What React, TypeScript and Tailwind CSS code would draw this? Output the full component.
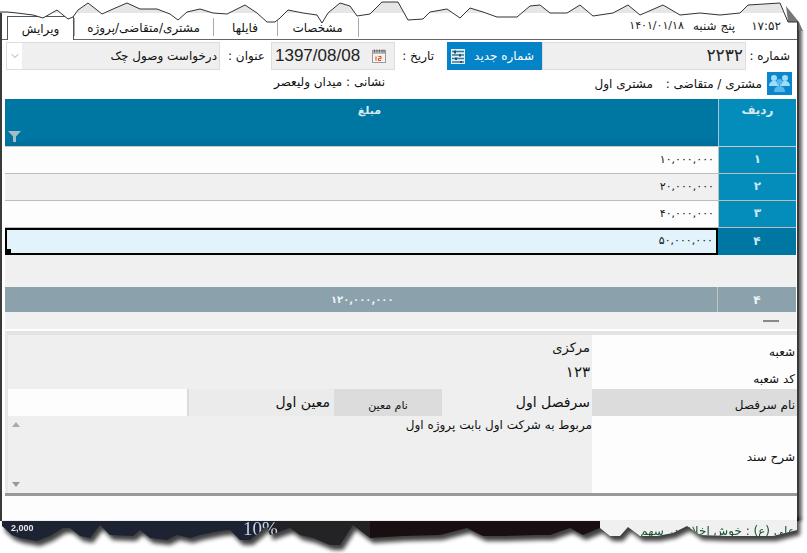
import React from "react";
import { ChevronDown } from "lucide-react";

const topEdge =
  "0,12 7,12 17,13 33,15 43,18 57,10 63,15 68,19 73,17 78,10 88,3 97,10 102,14 113,9 127,3 140,9 157,9 170,14 178,20 187,12 200,9 213,13 227,14 245,5 257,13 267,22 275,22 280,18 288,10 303,13 317,15 322,23 328,13 340,3 350,6 357,16 370,14 382,2 398,2 408,20 423,19 430,12 447,9 460,18 470,8 483,12 497,17 517,17 530,6 540,5 550,13 567,13 580,5 593,16 613,13 628,5 640,15 663,5 680,15 700,13 720,15 740,13 748,5 780,3 788,22 798,22 798,30";

const bottomEdge =
  "2,0 2,13 12,22 20,25 37,28 50,23 63,15 70,15 80,23 90,25 100,12 110,22 133,23 140,17 150,25 167,27 177,22 190,25 200,22 220,18 230,17 240,27 250,27 267,13 270,22 290,15 300,22 313,25 330,32 340,32 353,12 370,25 387,24 403,23 440,22 467,15 483,23 503,23 537,22 550,22 570,15 583,22 600,15 610,23 620,23 628,14 640,23 657,23 673,20 687,13 700,22 727,23 753,23 773,23 797,17 797,0";

const rows = [
  { n: "۱", v: "۱۰,۰۰۰,۰۰۰", bg: "bg-[#fdfdfd]" },
  { n: "۲", v: "۲۰,۰۰۰,۰۰۰", bg: "bg-[#f0f0f0]" },
  { n: "۳", v: "۴۰,۰۰۰,۰۰۰", bg: "bg-[#fdfdfd]" },
];

const tabs = [
  { t: "مشتری/متقاضی/پروژه", w: "w-[139px]" },
  { t: "فایلها", w: "w-[64px]" },
  { t: "مشخصات", w: "w-[81px]" },
];

function TornTop() {
  return (
    <svg className="absolute left-0 top-0 z-10" width="807" height="32">
      <defs>
        <clipPath id="band">
          <rect x="0" y="0" width="807" height="13" />
        </clipPath>
      </defs>
      <polygon points={`0,0 ${topEdge} 807,30 807,0`} fill="#ffffff" />
      <polygon points={`0,13 ${topEdge} 798,13`} fill="#e6e6e6" clipPath="url(#band)" />
      <polygon points="786,6 799,22 803,31 798,30 798,22 788,22" fill="#777777" />
      <polyline points={topEdge} fill="none" stroke="#333333" strokeWidth="1" />
    </svg>
  );
}

function TornBottom() {
  return (
    <svg
      className="absolute left-0 top-[513px] z-10 drop-shadow-[3px_5px_2px_rgba(0,0,0,0.75)]"
      width="807"
      height="40"
    >
      <defs>
        <clipPath id="torn">
          <polygon points={bottomEdge} />
        </clipPath>
      </defs>
      <g clipPath="url(#torn)">
        <rect x="0" y="0" width="270" height="40" fill="#1d2333" />
        <rect x="270" y="0" width="100" height="40" fill="#232325" />
        <rect x="370" y="0" width="230" height="40" fill="#1a0f10" />
        <rect x="600" y="0" width="199" height="40" fill="#f0f0f0" />
        <rect x="0" y="0" width="799" height="7" fill="#fdfdfd" />
        <rect x="0" y="7" width="799" height="1" fill="#eeeeee" />
        <text x="11" y="18" direction="ltr" fontSize="9" fontWeight="700" fill="#e5e7eb" fontFamily="Liberation Sans, sans-serif">2,000</text>
        <text x="243" y="22" direction="ltr" fontSize="19" fill="#c8d4e4" fontFamily="Liberation Serif, serif">10%</text>
        <text x="795" y="22" fontSize="12" direction="rtl" fill="#14532d" fontFamily="DejaVu Sans, sans-serif">علی (ع) : خوش اخلاق در سهم</text>
      </g>
    </svg>
  );
}

function CalendarIcon() {
  return (
    <svg width="14" height="14" viewBox="0 0 14 14">
      <rect x="0.5" y="1.5" width="13" height="12" fill="#f4f4f4" stroke="#9a9a9a" />
      <rect x="1" y="2" width="12" height="3" fill="#b9b9b9" />
      <path d="M2.5 0.5v3M5 0.5v3M7.5 0.5v3M10 0.5v3M12 0.5v3" stroke="#666" />
      <rect x="3" y="6.5" width="8" height="5.5" fill="#fde8d8" />
      <path d="M4 7.5v4M6.5 7.5h2.5v2h-2.5v2h2.5" stroke="#d8482a" fill="none" />
    </svg>
  );
}

function NumberIcon() {
  return (
    <svg width="14" height="15" viewBox="0 0 14 15">
      <rect x="0" y="0" width="14" height="15" fill="#e8eef2" />
      <path d="M1 2.5h12M1 6h12M1 9.5h12M1 13h12" stroke="#2f7d9b" strokeWidth="1.4" />
      <path d="M4 1.5v3M9 5v2.5M5 8.5v2.5M10 12v2" stroke="#20506a" strokeWidth="2" />
    </svg>
  );
}

function CustomerIcon() {
  return (
    <svg width="25" height="23" viewBox="0 0 25 23">
      <rect width="25" height="23" fill="#0a86cf" />
      <g fill="#9fdcf8">
        <circle cx="7" cy="6" r="3" />
        <circle cx="18" cy="6" r="3" />
        <path d="M2 14c0-3 2-5 5-5s5 2 5 5zM13 14c0-3 2-5 5-5s5 2 5 5z" />
      </g>
      <g fill="#58b8ea">
        <circle cx="12.5" cy="10" r="3" />
        <path d="M7 20c0-4 2.500-6 5.500-6s5.500 2 5.500 6z" />
      </g>
    </svg>
  );
}

export default function App() {
  return (
    <div
      dir="rtl"
      className="relative w-[807px] h-[553px] bg-white overflow-hidden text-[12px] text-[#111] font-['DejaVu_Sans',sans-serif]"
    >
      <TornTop />
      <div className="w-[799px] h-[521px] mr-[8px] flex flex-col bg-white border-x-2 border-[#3a3a3a] shadow-[3px_0_3px_rgba(0,0,0,0.6)]">
        {/* tabs + clock */}
        <div dir="ltr" className="h-[40px] shrink-0 flex items-end justify-between border-b border-[#666] pl-[5px] pr-[16px]">
          <div className="flex h-[23px] items-stretch">
            <div dir="rtl" className="w-[67px] flex items-center justify-center bg-white border-x border-t border-[#555] -mb-px z-[1]">ویرایش</div>
            {tabs.map((tab) => (
              <div key={tab.t} dir="rtl" className={`${tab.w} flex items-center justify-center relative`}>
                {tab.t}
                <span className="absolute left-0 top-[2px] bottom-[3px] w-px bg-[#aaa]" />
              </div>
            ))}
            <span className="w-px my-[2px] bg-[#aaa]" />
          </div>
          <div className="flex h-[18px] mb-[4px] items-center text-[#222]">
            <span className="text-[11px]">۱۴۰۱/۰۱/۱۸</span>
            <span dir="rtl" className="ml-[9px]">پنج شنبه</span>
            <span className="ml-[16px]">۱۷:۵۲</span>
          </div>
        </div>

        {/* form row */}
        <div className="h-[30px] shrink-0 flex items-center pr-[7px] pl-[4px] pt-[2px]">
          <span className="w-[44px] shrink-0">شماره :</span>
          <div className="w-[204px] h-[28px] shrink-0 flex items-center px-[2px] bg-[#efefef] border border-[#ddd] text-[17px] text-[#222]">۲۲۳۲</div>
          <button className="w-[95px] h-[28px] shrink-0 flex items-center justify-between pr-[8px] pl-[4px] bg-[#0583c9] text-white">
            <span>شماره جدید</span>
            <NumberIcon />
          </button>
          <span className="w-[52px] shrink-0 pr-[13px] whitespace-nowrap">تاریخ :</span>
          <div dir="ltr" className="w-[124px] h-[28px] shrink-0 flex items-center justify-between pl-[3px] pr-[8px] bg-[#efefef] border border-[#ddd] text-[17px] font-['Liberation_Sans',sans-serif] text-[#222]">
            <span>1397/08/08</span>
            <CalendarIcon />
          </div>
          <span className="w-[51px] shrink-0 pr-[6px] whitespace-nowrap">عنوان :</span>
          <div className="flex-1 h-[28px] flex items-center justify-between bg-[#efefef] border border-[#ddd]">
            <span className="pr-[2px]">درخواست وصول چک</span>
            <span className="w-[15px] h-full flex items-center justify-center bg-white">
              <ChevronDown size={12} strokeWidth={1} color="#555" />
            </span>
          </div>
        </div>

        {/* customer row */}
        <div className="h-[27px] shrink-0 flex items-center gap-[5px] pr-[5px]">
          <CustomerIcon />
          <span className="w-[100px] shrink-0 whitespace-nowrap">مشتری / متقاضی :</span>
          <span className="w-[62px] shrink-0 pr-[4px] whitespace-nowrap">مشتری اول</span>
          <span className="mr-[205px] -mt-[3px] whitespace-nowrap">نشانی : میدان ولیعصر</span>
        </div>

        {/* grid */}
        <div className="mr-px ml-[3px] flex flex-col mt-[2px]">
          <div className="h-[48px] flex border-b border-[#c8c8c8] text-[#d8e8f0] font-bold text-[11px]">
            <div className="w-[78px] shrink-0 pt-[2px] text-center text-[12px] bg-[#048dbb] border-l border-[#a9c6d2]">ردیف</div>
            <div className="flex-1 relative pt-[4px] pl-[16px] text-center bg-[linear-gradient(#0076a3,#0076a3_80%,#006f9a)]">
              مبلغ
              <svg className="absolute left-[3px] bottom-[4px]" width="13" height="11" viewBox="0 0 13 11">
                <path d="M0 0h13L8 5.500V11H5V5.500z" fill="#a8bcc6" />
              </svg>
            </div>
          </div>
          {rows.map((r) => (
            <div key={r.n} className={`h-[27px] flex border-b border-[#bdbdbd] ${r.bg}`}>
              <div className="w-[78px] shrink-0 flex items-center justify-center pb-[2px] bg-[#048dbb] text-[#cfe6ef] font-bold border-l border-[#c0c0c0]">{r.n}</div>
              <div className="flex-1 flex items-center pr-[4px] text-[11px] text-[#111]">{r.v}</div>
            </div>
          ))}
          <div className="h-[27px] flex">
            <div className="w-[78px] shrink-0 flex items-center justify-center pb-[2px] bg-[#0076a3] text-[#cfe6ef] font-bold">۴</div>
            <div className="flex-1 flex items-center pr-[3px] text-[11px] text-[#111] bg-[#e2f3fb] border-2 border-black relative">
              ۵۰,۰۰۰,۰۰۰
              <span className="absolute -left-[1px] -bottom-[1px] w-[5px] h-[5px] bg-black" />
            </div>
          </div>
          <div className="h-[32px] bg-[#f0f0f0]" />
          <div className="h-[25px] flex bg-[#8ba1ac] text-[#eef3f5] font-bold">
            <div className="w-[79px] shrink-0 flex items-center justify-center border-l border-[#c4c4c4]">۴</div>
            <div className="w-[323px] shrink-0 mr-[63px] flex items-center text-[10px] justify-end">۱۲۰,۰۰۰,۰۰۰</div>
          </div>
          <div className="h-[17px] bg-[#f0f0f0] flex items-center pr-[17px]">
            <span className="w-[16px] h-[2px] bg-[#888]" />
          </div>
        </div>

        {/* detail panel */}
        <div className="mt-[2px] flex flex-col border-t-4 border-[#e3e3e3] ml-[3px] border-l-[3px] border-l-[#e8e8e8]">
          <div className="h-[54px] flex">
            <div className="w-[205px] shrink-0 flex flex-col pr-[2px] text-[12px] bg-[#fdfdfd]">
              <span className="h-[27px] pt-[8px]">شعبه</span>
              <span className="h-[27px] pt-[8px]">کد شعبه</span>
            </div>
            <div className="flex-1 flex flex-col bg-[#efefef] text-[13px]">
              <span className="h-[27px] pt-[3px] pr-[2px]">مرکزی</span>
              <span className="h-[27px] pr-[2px] text-[15px] -mt-px">۱۲۳</span>
            </div>
          </div>
          <div className="h-[27px] flex">
            <div className="w-[205px] shrink-0 flex items-end pb-[2px] pr-[2px] bg-[#dcdcdc]">نام سرفصل</div>
            <div className="w-[150px] shrink-0 pt-[3px] pr-[2px] bg-[#efefef] text-[14px]">سرفصل اول</div>
            <div className="w-[108px] shrink-0 flex items-end justify-center pb-[2px] bg-[#dcdcdc] text-[11px]">نام معین</div>
            <div className="w-[145px] shrink-0 pr-[4px] pt-[3px] bg-[#ebebeb] text-[14px]">معین اول</div>
            <div className="flex-1 bg-[#fdfdfd] border-r-2 border-[#dcdcdc]" />
          </div>
          <div className="h-[77px] flex">
            <div className="w-[205px] shrink-0 flex items-center pr-[2px] bg-[#fdfdfd] pt-[5px]">شرح سند</div>
            <div className="flex-1 flex bg-[#efefef] justify-between">
              <span>مربوط به شرکت اول بابت پروژه اول</span>
              <div className="w-[14px] ml-[1px] flex flex-col justify-between items-center py-[6px]">
                <span className="w-0 h-0 border-x-[4px] border-x-transparent border-b-[5px] border-b-[#aaa]" />
                <span className="w-0 h-0 border-x-[4px] border-x-transparent border-t-[5px] border-t-[#999]" />
              </div>
            </div>
          </div>
        </div>
        <div className="h-[3px] bg-[#999] ml-[3px] shrink-0" />
        <div className="flex-1 bg-[#fdfdfd]" />
      </div>
      <TornBottom />
    </div>
  );
}
